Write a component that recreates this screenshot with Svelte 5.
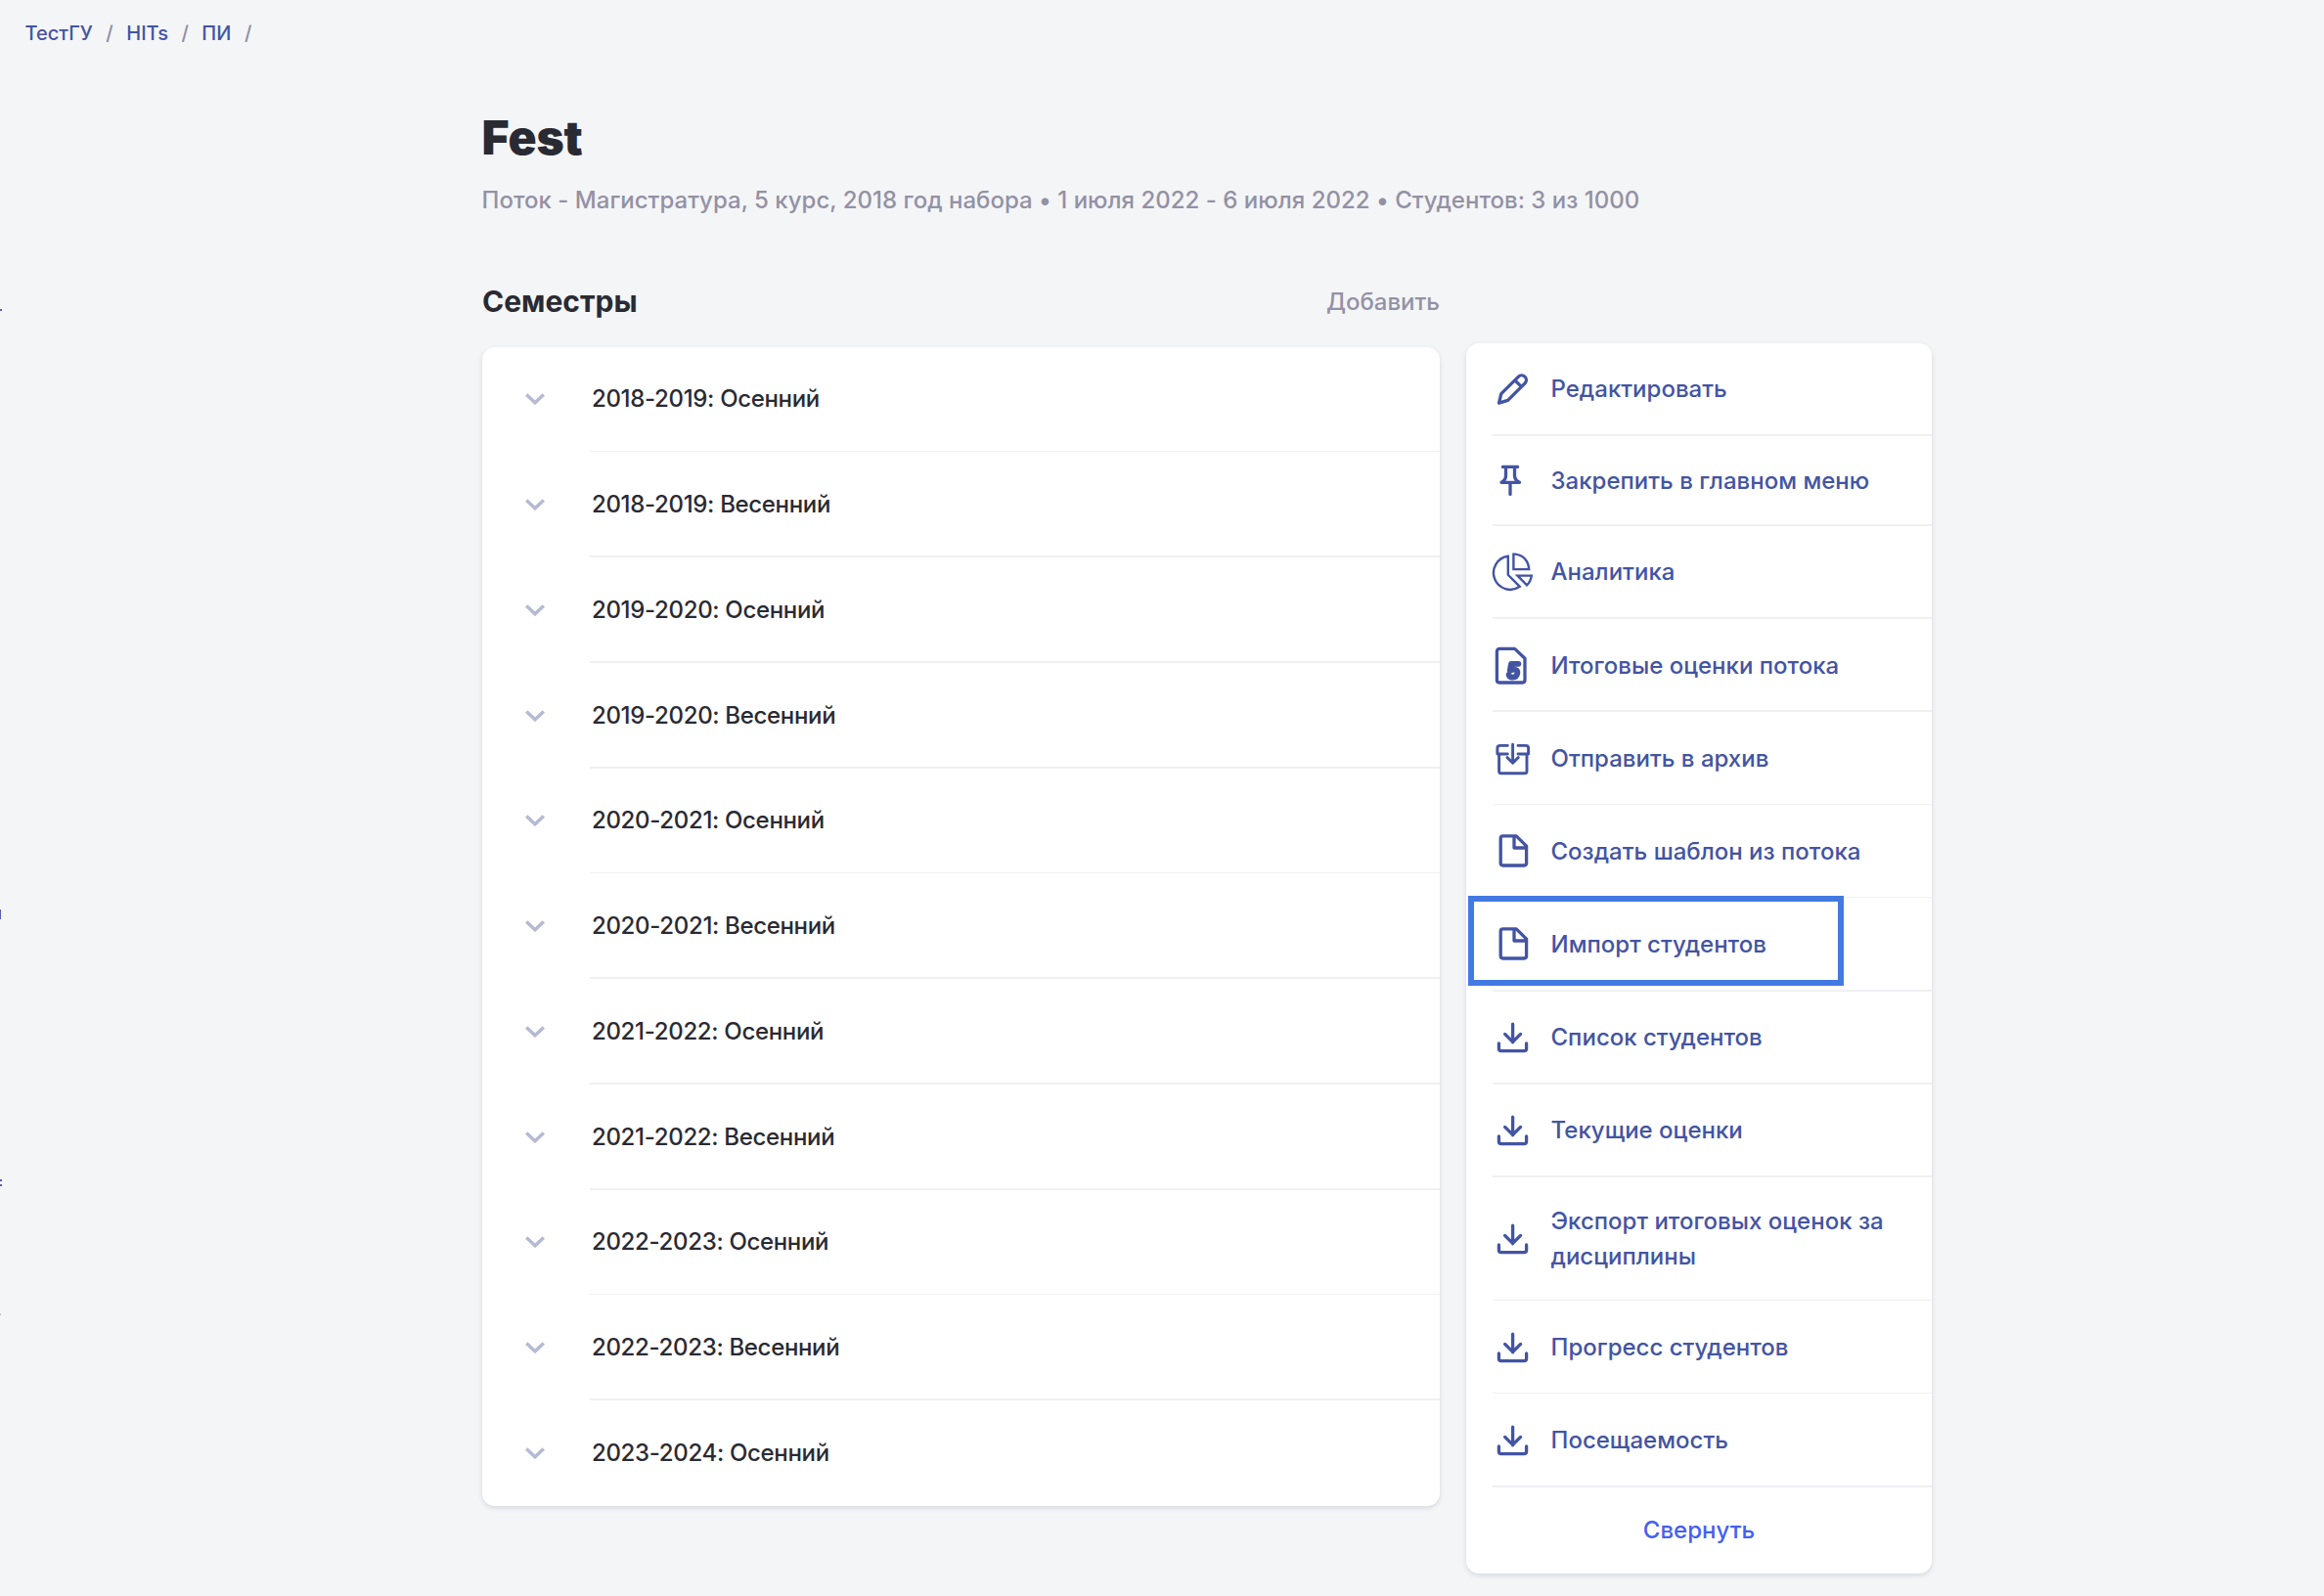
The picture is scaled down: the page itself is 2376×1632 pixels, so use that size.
<script>
  const crumbs = ['ТестГУ', 'HITs', 'ПИ'];
  const semesters = [
    ['2018-2019: Осенний', true],
    ['2018-2019: Весенний', false],
    ['2019-2020: Осенний', false],
    ['2019-2020: Весенний', false],
    ['2020-2021: Осенний', true],
    ['2020-2021: Весенний', false],
    ['2021-2022: Осенний', false],
    ['2021-2022: Весенний', false],
    ['2022-2023: Осенний', true],
    ['2022-2023: Весенний', false],
    ['2023-2024: Осенний', false],
  ];
  const actions = [
    { icon: 'edit', label: 'Редактировать' },
    { icon: 'pin', label: 'Закрепить в главном меню', low: true },
    { icon: 'chart', label: 'Аналитика' },
    { icon: 'grades', label: 'Итоговые оценки потока', low: true },
    { icon: 'archive', label: 'Отправить в архив', thin: true, low: true },
    { icon: 'file', label: 'Создать шаблон из потока', thin: true, low: true },
    { icon: 'file', label: 'Импорт студентов', marked: true, low: true },
    { icon: 'download', label: 'Список студентов' },
    { icon: 'download', label: 'Текущие оценки' },
    { icon: 'download', label: 'Экспорт итоговых оценок за дисциплины', thin: true },
    { icon: 'download', label: 'Прогресс студентов', thin: true, low: true },
    { icon: 'download', label: 'Посещаемость', low: true },
  ];
</script>

<div class="page">
  <!-- edge of the off-canvas navigation -->
  <svg class="edge" viewBox="0 0 2 1632">
    <path d="M0 316h2v2H0z M0 930h1v10H0z M0 1206h2v2H0z M0 1211h2v2H0z" />
    <path class="faint" d="M0 1343h1v2H0z" />
  </svg>

  <nav class="crumbs">
    {#each crumbs as crumb}
      <a class="crumb" href="#top">{crumb}</a><span class="sep">/</span>
    {/each}
  </nav>

  <header class="head">
    <h1>Fest</h1>
    <p class="meta">Поток - Магистратура, 5 курс, 2018 год набора • 1 июля 2022 - 6 июля 2022 • Студентов: 3 из 1000</p>
  </header>

  <main class="columns">
    <section class="main">
      <div class="section-head">
        <h2>Семестры</h2>
        <button class="add">Добавить</button>
      </div>
      <ul class="card semesters">
        {#each semesters as [name, thin]}
          <li class="semester" class:thin>
            <svg class="chevron" viewBox="0 0 20 12"><path d="M1.2 1.4 L10 9.8 L18.8 1.4" /></svg>
            <span class="name">{name}</span>
          </li>
        {/each}
      </ul>
    </section>

    <aside class="card side">
      {#each actions as action}
        <a class="action" class:thin={action.thin} class:low={action.low} href="#top">
          <svg class="icon" viewBox="0 0 42 42">
            {#if action.icon === 'edit'}
              <path d="M6.5 35.1 L8.8 25.6 L26.2 8.3 A4.6 4.6 0 0 1 33.1 14.9 L15.6 32.4 Z M22.8 11.8 L29.4 18.4" />
            {:else if action.icon === 'pin'}
              <path d="M10.4 6.4 H25.6 M13.5 6.4 V15.5 Q13.5 20 9 22.3 H27.5 Q22.5 20 22.5 15.5 V6.4 M18 22.3 V34.4" />
            {:else if action.icon === 'chart'}
              <path class="fine" d="M15.8 4.8 A17.1 17.1 0 1 0 27.8 35.8 L15.8 23.8 Z M21.4 2.6 H23 Q36 4.5 37.2 18.1 H21.4 Z M25.5 24.6 H39.8 Q39 30.5 35 34.4 Z" />
            {:else if action.icon === 'grades'}
              <path d="M7.4 3.4 H22.6 L33 13.2 V35.6 Q33 38 30.6 38 H6.8 Q4.4 38 4.4 35.6 V6.4 Q4.4 3.4 7.4 3.4 Z" />
              <path class="bold" d="M26.4 18.8 H19 L17.8 25.6 Q25.5 23 25.4 28 Q24.8 32.8 20.4 32.7 Q16.8 32.6 16.6 29.8" />
            {:else if action.icon === 'archive'}
              <path class="mid" d="M15.3 7.4 H7.6 Q4.9 7.4 4.9 10 V16 H15.3 M26 7.4 H34 Q36.6 7.4 36.6 10 V16 H26 M6.6 16 V33.4 Q6.6 35.8 9 35.8 H32.6 Q35 35.8 35 33.4 V16 M20.6 6.2 V25 M15 19.6 L20.6 25.2 L26.2 19.6" />
            {:else if action.icon === 'file'}
              <path d="M10.6 4.8 H24.2 L34.6 15.2 V32.6 Q34.6 35 32.2 35 H10.6 Q8.2 35 8.2 32.6 V7.2 Q8.2 4.8 10.6 4.8 Z M22 5 V17 H34" />
            {:else}
              <path d="M20.6 7.2 V25.8 M12.6 17.4 L20.6 25.4 L28.6 17.4 M6.4 26.8 V32.2 Q6.4 34.6 8.8 34.6 H32.2 Q34.6 34.6 34.6 32.2 V26.8" />
            {/if}
          </svg>
          <span>{action.label}</span>
          {#if action.marked}<i class="marker"></i>{/if}
        </a>
      {/each}
      <button class="collapse">Свернуть</button>
    </aside>
  </main>
</div>

<style>
  :global(body) {
    background: #f4f5f7;
  }
  .page {
    position: relative;
    box-sizing: border-box;
    width: 2376px;
    height: 1632px;
    overflow: hidden;
    font-family: Inter, sans-serif;
    font-size: 24px;
    font-weight: 460;
    color: #2a2a33;
  }
  .edge {
    position: absolute;
    left: 0;
    top: 0;
    width: 2px;
    height: 1632px;
    fill: #5562ab;
  }
  .faint {
    fill: #c3c4cf;
  }
  a {
    color: #4354a3;
    text-decoration: none;
  }
  button {
    padding: 0;
    border: 0;
    background: none;
    font: inherit;
  }
  .crumbs {
    display: flex;
    gap: 13.5px;
    height: 68px;
    padding-left: 25.5px;
    box-sizing: border-box;
    align-items: center;
    font-size: 20px;
  }
  .sep {
    color: #8d8ca0;
  }
  .head {
    padding: 41px 0 0 492.6px;
  }
  h1 {
    margin: 0;
    font-size: 48px;
    line-height: 64px;
    font-weight: 900;
    letter-spacing: -0.2px;
  }
  .meta {
    margin: 14px 0 0;
    line-height: 36px;
    color: #9391a5;
    letter-spacing: 0.01px;
    white-space: nowrap;
  }
  .columns {
    display: flex;
    align-items: flex-start;
    gap: 27px;
    padding: 60px 0 0 493px;
  }
  .main {
    width: 979px;
  }
  .section-head {
    display: flex;
    justify-content: space-between;
    align-items: center;
    height: 50px;
    margin-bottom: 22px;
  }
  h2 {
    margin: 0;
    font-size: 30px;
    font-weight: 700;
  }
  .add {
    color: #9391a5;
  }
  .card {
    background: #fff;
    border-radius: 13px;
    box-shadow: 0 2px 5px rgba(30, 40, 80, 0.14);
  }
  .semesters {
    margin: 0;
    padding: 0;
    list-style: none;
    display: grid;
    grid-template-rows: 107px 108px 108px 108px 107px 108px 108px 108px 107px 108px 108px;
  }
  .semester {
    display: flex;
    align-items: center;
    padding-left: 44px;
  }
  .chevron {
    width: 20px;
    height: 12px;
    margin-right: 46px;
    fill: none;
    stroke: #b6b9d3;
    stroke-width: 3.4;
  }
  .thin .chevron {
    margin-bottom: 1px;
  }
  .name {
    flex: 1;
    display: flex;
    align-items: center;
    box-sizing: border-box;
    height: 100%;
    padding: 2px 0 0 2px;
    line-height: 28px;
    letter-spacing: -0.33px;
    border-bottom: 2px solid #f0f0f2;
  }
  .thin .name {
    padding-bottom: 2px;
    border-bottom-width: 1px;
  }
  .semester:last-child .name {
    border-bottom-color: transparent;
  }
  .side {
    width: 476px;
    margin-top: 68px;
    display: grid;
    grid-template-rows: 95px 92px 95px 95px 95px 95px 96px 95px 95px 126px 95px 96px 88px;
  }
  .action {
    position: relative;
    display: flex;
    align-items: center;
    gap: 17.5px;
    margin-left: 27px;
    border-bottom: 2px solid #f0f0f2;
    line-height: 36px;
    letter-spacing: 0.01px;
  }
  .action.thin {
    border-bottom-width: 1px;
  }
  .action.low {
    padding-top: 2px;
  }
  .icon {
    flex: none;
    width: 42px;
    height: 42px;
    overflow: visible;
    fill: none;
    stroke: #4354a3;
    stroke-width: 3.3;
    stroke-linecap: round;
    stroke-linejoin: round;
  }
  .fine {
    stroke-width: 2.4;
    stroke-linejoin: miter;
  }
  .mid {
    stroke-width: 2.9;
  }
  .bold {
    stroke-width: 5.8;
  }
  .marker {
    position: absolute;
    left: -25px;
    top: -2px;
    width: 372px;
    height: 80px;
    border: 6px solid #4379e2;
  }
  .collapse {
    padding-bottom: 2px;
    color: #4560f0;
  }
</style>
